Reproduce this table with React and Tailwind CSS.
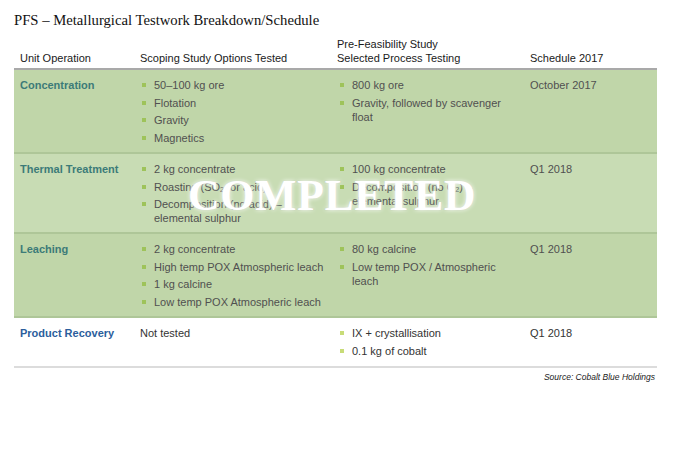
import React from "react";

const Bullet = ({ children, light }) => (
  <li className="flex items-start mb-[3.5px]">
    <span className={`mt-[5px] w-[4px] h-[4px] shrink-0 ${light ? "bg-[#c8dc78]" : "bg-[#9ec35a]"}`}></span>
    <span className="ml-[8px]">{children}</span>
  </li>
);

const rows = [
  {
    label: "Concentration",
    labelColor: "text-[#3c7b78]",
    bg: "bg-[#c0d6a9]",
    h: "h-[84px]",
    scoping: ["50–100 kg ore", "Flotation", "Gravity", "Magnetics"],
    pfs: ["800 kg ore", "Gravity, followed by scavenger float"],
    sched: "October 2017",
  },
  {
    label: "Thermal Treatment",
    labelColor: "text-[#3c7b78]",
    bg: "bg-[#c8dcb4]",
    h: "h-[80px]",
    scoping: [
      "2 kg concentrate",
      <>Roasting (SO<sub className="text-[7px]">2</sub> for acid)</>,
      "Decomposition (no acid) – elemental sulphur",
    ],
    pfs: [
      "100 kg concentrate",
      <>Decomposition (no O<sub className="text-[7px]">2</sub>) – elemental sulphur</>,
    ],
    sched: "Q1 2018",
  },
  {
    label: "Leaching",
    labelColor: "text-[#3c7b78]",
    bg: "bg-[#c0d6a9]",
    h: "h-[84px]",
    scoping: [
      "2 kg concentrate",
      "High temp POX Atmospheric leach",
      "1 kg calcine",
      "Low temp POX Atmospheric leach",
    ],
    pfs: ["80 kg calcine", "Low temp POX / Atmospheric leach"],
    sched: "Q1 2018",
  },
];

export default function App() {
  return (
    <div className="w-[683px] h-[475px] bg-white relative" style={{ fontFamily: '"Liberation Sans", Arial, sans-serif' }}>
      <div className="pl-[14px] pt-[11px]">
        <h1 className="text-[14.7px] leading-[18px] text-[#111]" style={{ fontFamily: '"Liberation Serif", "Times New Roman", serif' }}>
          PFS – Metallurgical Testwork Breakdown/Schedule
        </h1>
        <div className="w-[643px] mt-[8px] relative text-[11px] leading-[14px]">
          {/* header */}
          <div className="flex items-end pb-[3px] border-b-2 border-[#a9a9a9] text-[#1a1a1a]">
            <div className="w-[126px] pl-[6px]">Unit Operation</div>
            <div className="w-[197px]">Scoping Study Options Tested</div>
            <div className="w-[193px]">Pre-Feasibility Study<br />Selected Process Testing</div>
            <div className="flex-1">Schedule 2017</div>
          </div>
          {rows.map((r, i) => (
            <div key={i} className={`flex ${r.bg} ${r.h} pt-[8px] border-b-2 border-[#aec698] text-[#505050]`}>
              <div className={`w-[126px] pl-[6px] font-bold ${r.labelColor}`}>{r.label}</div>
              <ul className="w-[197px] pl-[2px] pr-[9px]">
                {r.scoping.map((s, j) => <Bullet key={j}>{s}</Bullet>)}
              </ul>
              <ul className="w-[193px] pl-[3px] pr-[20px]">
                {r.pfs.map((s, j) => <Bullet key={j}>{s}</Bullet>)}
              </ul>
              <div className="flex-1">{r.sched}</div>
            </div>
          ))}
          <div className="flex h-[50px] pt-[8px] border-b-2 border-[#dcdcdc] text-[#333]">
            <div className="w-[126px] pl-[6px] font-bold text-[#2b5e9c]">Product Recovery</div>
            <div className="w-[197px]">Not tested</div>
            <ul className="w-[193px] pl-[3px]">
              <Bullet light>IX + crystallisation</Bullet>
              <Bullet light>0.1 kg of cobalt</Bullet>
            </ul>
            <div className="flex-1">Q1 2018</div>
          </div>
          <div className="text-right italic text-[8.5px] leading-[10px] pt-[4px] pr-[2px] text-[#222]">
            Source: Cobalt Blue Holdings
          </div>
          <div
            className="absolute left-[174px] top-[134px] text-[44px] leading-[50px] font-bold text-white tracking-[0.5px]"
            style={{ fontFamily: '"Liberation Serif", "Times New Roman", serif', textShadow: "0 0 4px rgba(255,255,255,0.95), 0 0 1px rgba(120,120,120,0.5)" }}
          >
            COMPLETED
          </div>
        </div>
      </div>
    </div>
  );
}
